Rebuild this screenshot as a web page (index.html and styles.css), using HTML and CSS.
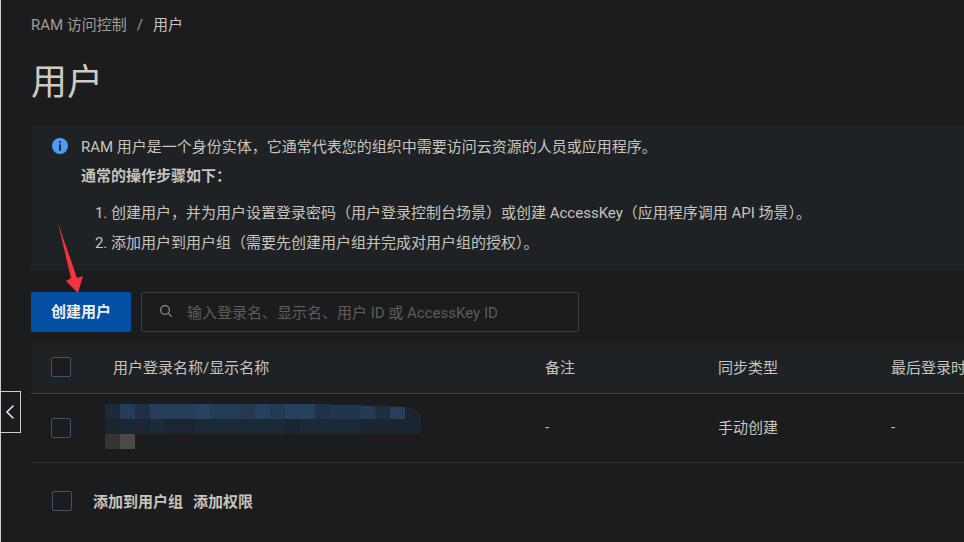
FILE: index.html
```html
<!DOCTYPE html>
<html lang="zh-CN">
<head>
    <meta charset="UTF-8">
    <meta name="viewport" content="width=device-width, initial-scale=1.0">
    <title>用户 - RAM 访问控制</title>
    <link rel="stylesheet" href="styles.css">
</head>
<body>
    <button class="side-toggle" aria-label="收起">
        <svg width="12" height="18" viewBox="0 0 12 18"><path d="M9.5 2.5 3 9l6.5 6.5" fill="none" stroke="#e6e2da" stroke-width="1.6"/></svg>
    </button>

    <main class="page">
        <div class="crumbs">
            <span>RAM 访问控制</span>
            <span class="crumb-sep">/</span>
            <span class="crumb-now">用户</span>
        </div>

        <h1 class="title">用户</h1>

        <div class="notice">
            <svg class="notice-icon" width="16" height="16" viewBox="0 0 16 16">
                <circle cx="8" cy="8" r="8" fill="#4a9ff5"/>
                <rect x="7" y="3.2" width="2" height="2" fill="#1e2a36"/>
                <rect x="7" y="6.4" width="2" height="6.4" fill="#1e2a36"/>
            </svg>
            <div class="notice-body">
                <p class="notice-line">RAM 用户是一个身份实体，它通常代表您的组织中需要访问云资源的人员或应用程序。</p>
                <p class="notice-line notice-strong">通常的操作步骤如下：</p>
                <ol class="steps">
                    <li>创建用户，并为用户设置登录密码（用户登录控制台场景）或创建 AccessKey（应用程序调用 API 场景）。</li>
                    <li>添加用户到用户组（需要先创建用户组并完成对用户组的授权）。</li>
                </ol>
            </div>
        </div>

        <div class="toolbar">
            <button class="btn-primary">创建用户</button>
            <div class="search">
                <svg width="14" height="14" viewBox="0 0 14 14"><circle cx="6" cy="6" r="4.4" fill="none" stroke="#8f8a80" stroke-width="1.2"/><path d="m9.3 9.3 3.4 3.4" stroke="#8f8a80" stroke-width="1.2"/></svg>
                <span class="search-hint">输入登录名、显示名、用户 ID 或 AccessKey ID</span>
            </div>
        </div>

        <table class="users">
            <thead>
                <tr>
                    <th class="col-check"><span class="checkbox"></span></th>
                    <th class="col-name">用户登录名称/显示名称</th>
                    <th class="col-note">备注</th>
                    <th class="col-sync">同步类型</th>
                    <th class="col-login">最后登录时间</th>
                </tr>
            </thead>
            <tbody>
                <tr>
                    <td><span class="checkbox"></span></td>
                    <td>
                        <!-- blurred user name -->
                        <svg class="mosaic" width="316" height="60" viewBox="0 1 316 60" shape-rendering="crispEdges">
                            <path d="M8 8H225Q270 8 300 11Q316 13 316 24V38H15V52H10Q0 46 0 36V18Q0 8 8 8Z" fill="#1b2530"/>
                            <rect x="0" y="8" width="15" height="15" fill="#1c2a38"/>
                            <rect x="15" y="8" width="15" height="15" fill="#233c58"/>
                            <rect x="30" y="8" width="15" height="15" fill="#1f3044"/>
                            <rect x="45" y="8" width="45" height="15" fill="#243d59"/>
                            <rect x="90" y="8" width="15" height="15" fill="#26435f"/>
                            <rect x="105" y="8" width="30" height="15" fill="#233c56"/>
                            <rect x="135" y="8" width="15" height="15" fill="#223950"/>
                            <rect x="150" y="8" width="15" height="15" fill="#26415e"/>
                            <rect x="165" y="8" width="15" height="15" fill="#223a54"/>
                            <rect x="180" y="8" width="30" height="15" fill="#26415e"/>
                            <rect x="210" y="8" width="15" height="15" fill="#1f3246"/>
                            <rect x="225" y="9" width="30" height="14" fill="#20364c"/>
                            <rect x="255" y="10" width="15" height="13" fill="#233a54"/>
                            <rect x="270" y="11" width="15" height="12" fill="#1e2f42"/>
                            <rect x="285" y="11" width="15" height="12" fill="#25405c"/>
                            <rect x="0" y="23" width="15" height="15" fill="#1b2530"/>
                            <rect x="15" y="23" width="30" height="15" fill="#1c2736"/>
                            <rect x="45" y="23" width="15" height="15" fill="#1b2a38"/>
                            <rect x="60" y="23" width="30" height="15" fill="#1b2630"/>
                            <rect x="90" y="23" width="45" height="15" fill="#1b2836"/>
                            <rect x="135" y="23" width="45" height="15" fill="#1c2a38"/>
                            <rect x="195" y="23" width="60" height="15" fill="#1c2a38"/>
                            <rect x="0" y="38" width="15" height="15" fill="#333436"/>
                            <rect x="15" y="38" width="15" height="15" fill="#4b4b46"/>
                        </svg>
                    </td>
                    <td>-</td>
                    <td>手动创建</td>
                    <td>-</td>
                </tr>
            </tbody>
        </table>

        <div class="batch">
            <span class="checkbox"></span>
            <span class="batch-actions">
                <a>添加到用户组</a>
                <a>添加权限</a>
            </span>
        </div>
    </main>

    <!-- annotation drawn on top of the screenshot -->
    <svg class="arrow" width="30" height="74" viewBox="0 0 30 74">
        <path d="M1 0 21 70 26 53 20 55Z M1 0 14 55 9 58 21 70Z" fill="#f6323c"/>
    </svg>
</body>
</html>
```

FILE: styles.css
```css
* {
    box-sizing: border-box;
}
html, body {
    margin: 0;
    height: 100%;
}
body {
    width: 964px;
    height: 542px;
    overflow: hidden;
    position: relative;
    background-color: #1a1c1e;
    border-left: 1px solid #c9ccd0;
    color: #c8c4bc;
    font-family: Roboto, "Noto Sans CJK SC", sans-serif;
    font-size: 15px;
}
.page {
    padding: 15px 0 0 30px;
    width: 1200px;
}
.crumbs {
    display: flex;
    gap: 10px;
    height: 20px;
    line-height: 20px;
    color: #a09c93;
}
.crumb-now {
    color: #c8c4bc;
}
.title {
    margin: 20px 0 0;
    height: 70px;
    line-height: 56px;
    font-size: 36px;
    font-weight: 400;
    color: #cfcbc3;
}
.notice {
    display: flex;
    width: 1000px;
    height: 145px;
    padding: 12px 21px;
    gap: 13px;
    background-color: #1e2224;
    border-radius: 2px;
}
.notice-icon {
    flex: none;
    margin-top: 1px;
}
.notice-line {
    margin: 0 0 9px;
    line-height: 20px;
    height: 20px;
}
.notice-strong {
    font-weight: 700;
}
.steps {
    margin: 12px 0 0;
    padding-left: 30px;
}
.steps li {
    height: 30px;
    line-height: 30px;
}
.toolbar {
    display: flex;
    gap: 10px;
    margin-top: 22px;
}
.btn-primary {
    width: 100px;
    height: 40px;
    padding: 0 0 4px;
    border: 0;
    border-radius: 2px;
    background-color: #0550a5;
    color: #eef0f2;
    font: 700 15px Roboto, "Noto Sans CJK SC", sans-serif;
}
.search {
    display: flex;
    align-items: center;
    gap: 14px;
    width: 438px;
    height: 40px;
    padding-left: 17px;
    padding-bottom: 2px;
    border: 1px solid #3a3d40;
    border-radius: 2px;
}
.search-hint {
    color: #5f5d59;
}
.users {
    width: 1100px;
    margin-top: 10px;
    border-collapse: collapse;
    table-layout: fixed;
}
.users th, .users td {
    padding: 0 0 2px;
    text-align: left;
    font-weight: 400;
    vertical-align: middle;
}
.users th {
    height: 51px;
    background-color: #1e2224;
    border-bottom: 1px solid #3c3f41;
}
.users td {
    height: 69px;
    border-bottom: 1px solid #333537;
}
.col-check { width: 82px; }
.col-name { width: 432px; }
.col-note { width: 173px; }
.col-sync { width: 173px; }
.checkbox {
    display: block;
    width: 20px;
    height: 20px;
    margin-left: 20px;
    border: 1px solid #3f546b;
    border-radius: 2px;
    background-color: #1a1c1e;
}
.users .checkbox {
    margin-top: 2px;
}
.mosaic {
    display: block;
    margin-left: -8px;
}
.batch {
    display: flex;
    align-items: center;
    padding-left: 1px;
    margin-top: 27px;
    font-weight: 700;
}
.batch-actions {
    display: flex;
    gap: 10px;
    margin-left: 21px;
    padding-bottom: 2px;
}
.side-toggle {
    position: absolute;
    left: -1px;
    top: 391px;
    width: 21px;
    height: 42px;
    padding: 0;
    display: flex;
    align-items: center;
    justify-content: center;
    background-color: #1a1c1e;
    border: 1px solid #c9ccd0;
    border-left: 0;
}
.arrow {
    position: absolute;
    left: 56px;
    top: 223px;
}
```
